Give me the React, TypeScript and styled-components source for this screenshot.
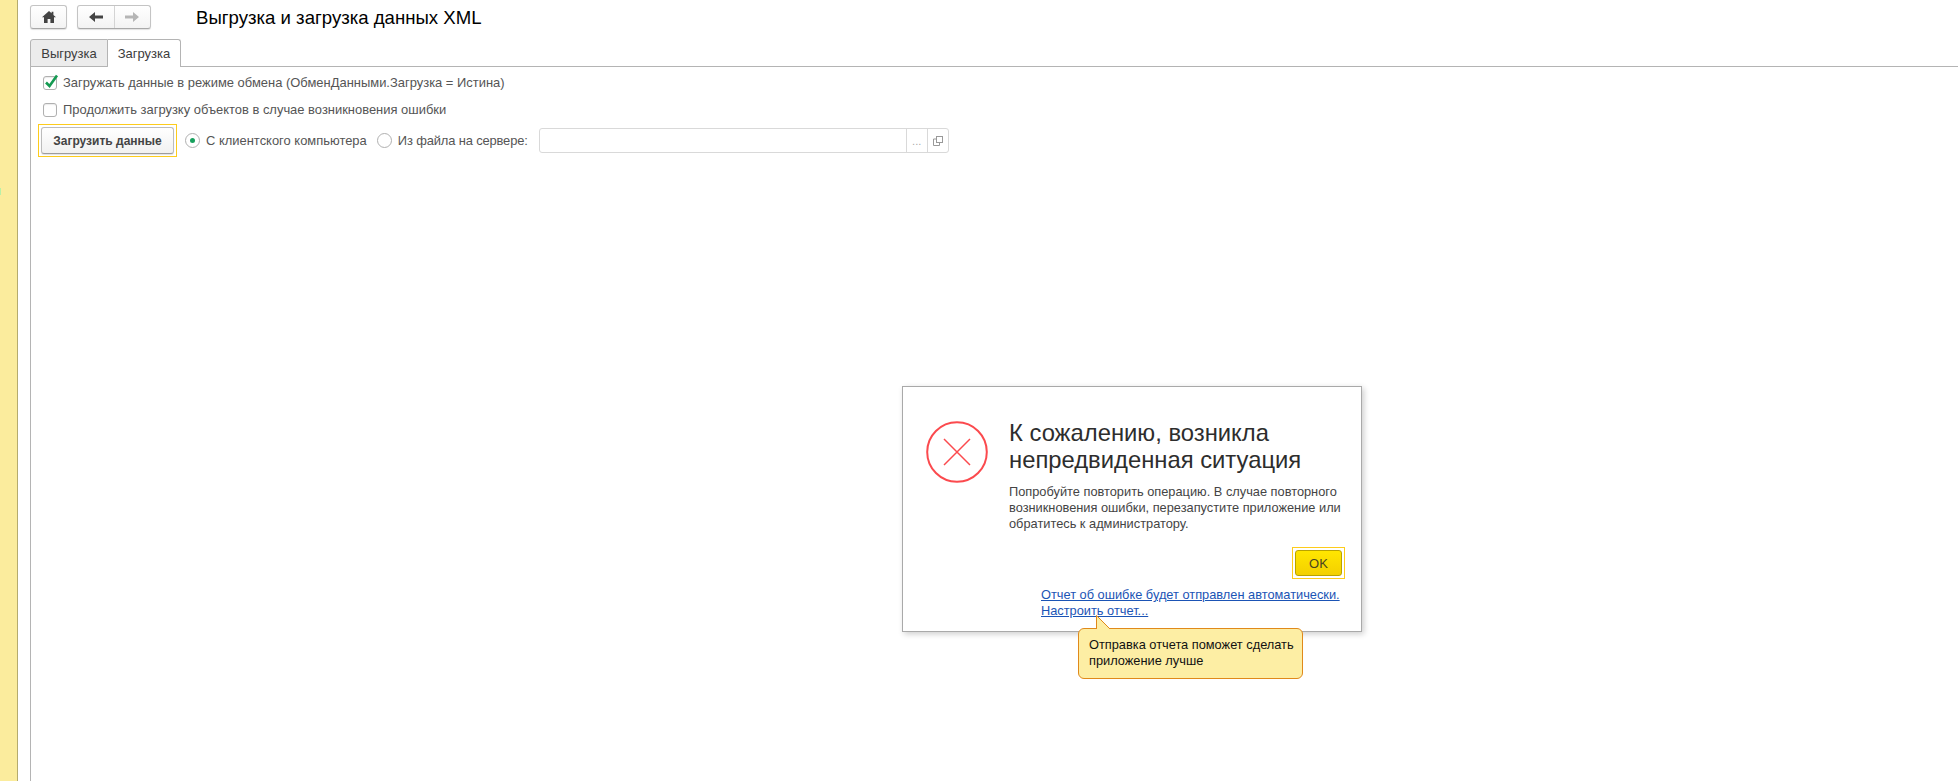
import { createGlobalStyle, styled } from 'styled-components'

const GlobalStyle = createGlobalStyle`
  html, body {
    margin: 0;
    padding: 0;
    height: 100%;
    background: #fff;
    overflow: hidden;
  }
  #root {
    height: 100%;
  }
  * {
    box-sizing: border-box;
  }
`

const Page = styled.div`
  position: relative;
  display: flex;
  width: 1958px;
  height: 781px;
  overflow: hidden;
  font-family: "Liberation Sans", Arial, sans-serif;
  font-size: 12px;
  color: #4b4b4b;
`

const SideStrip = styled.div`
  position: relative;
  flex: none;
  width: 18px;
  background: #fbec9d;
  border-right: 1px solid #b5ab6e;

  &::after {
    content: '';
    position: absolute;
    left: 0;
    top: 188px;
    width: 1px;
    height: 7px;
    background: #b8f0a8;
  }
`

const Main = styled.div`
  flex: 1;
  display: flex;
  flex-direction: column;
  padding-left: 12px;
`

const Header = styled.div`
  display: flex;
  align-items: center;
  height: 39px;
  padding-bottom: 5px;
`

const ToolButton = styled.div<{ $width: number }>`
  display: flex;
  width: ${p => p.$width}px;
  height: 24px;
  margin-right: 10px;
  background: linear-gradient(#fff, #f3f3f3);
  border: 1px solid #c4c4c4;
  border-bottom-color: #a8a8a8;
  border-radius: 3px;
  box-shadow: 0 1px 1px rgba(0, 0, 0, 0.12);
`

const ToolCell = styled.div`
  flex: 1;
  display: flex;
  align-items: center;
  justify-content: center;

  & + & {
    border-left: 1px solid #d4d4d4;
  }
`

const Title = styled.h1`
  margin: 2px 0 0 35px;
  font-size: 18.6px;
  font-weight: 400;
  line-height: 24px;
  color: #000;
`

const TabBar = styled.div`
  display: flex;
  height: 28px;
  border-bottom: 1px solid #b4b4b4;
`

const Tab = styled.div<{ $active?: boolean }>`
  display: flex;
  align-items: center;
  justify-content: center;
  width: ${p => (p.$active ? 73 : 78)}px;
  height: 28px;
  font-size: 13px;
  color: #3c3c3c;
  background: ${p => (p.$active ? '#fff' : '#ececec')};
  border: 1px solid #b4b4b4;
  border-left: ${p => (p.$active ? 'none' : '1px solid #b4b4b4')};
  border-bottom: ${p => (p.$active ? 'none' : '1px solid #b4b4b4')};
  border-radius: ${p => (p.$active ? '0 3px 0 0' : '3px 0 0 0')};
`

const Panel = styled.div`
  flex: 1;
  border-left: 1px solid #b4b4b4;
  padding: 8px 0 0 7px;
`

const CheckRow = styled.div`
  display: flex;
  align-items: center;
  height: 16px;
  margin-left: 5px;

  & + & {
    margin-top: 11px;
  }
`

const CheckBox = styled.span`
  position: relative;
  flex: none;
  width: 14px;
  height: 14px;
  margin-right: 6px;
  background: #fff;
  border: 1px solid #b0b0b0;
  border-radius: 3px;
  box-shadow: inset 0 1px 1px rgba(0, 0, 0, 0.08);

  svg {
    position: absolute;
    left: 0;
    top: -4px;
  }
`

const FieldText = styled.span<{ $tight?: boolean }>`
  font-size: 12.95px;
  letter-spacing: ${p => (p.$tight ? '-0.15px' : '0')};
  line-height: 16px;
  white-space: nowrap;
  color: #555;
`

const ActionRow = styled.div`
  display: flex;
  align-items: center;
  height: 33px;
  margin-top: 6px;
`

const FocusFrame = styled.div`
  flex: none;
  padding: 2px;
  background: #fff;
  border: 1px solid #fdcc1c;
`

const LoadButton = styled.div`
  display: flex;
  align-items: center;
  justify-content: center;
  width: 133px;
  height: 27px;
  font-size: 12px;
  font-weight: 700;
  color: #444;
  background: linear-gradient(#fff, #f1f1f1);
  border: 1px solid #bcbcbc;
  border-bottom-color: #9d9d9d;
  border-radius: 3px;
  box-shadow: 0 1px 1px rgba(0, 0, 0, 0.12);
`

const RadioItem = styled.div<{ $gap: number }>`
  display: flex;
  align-items: center;
  margin-left: ${p => p.$gap}px;
`

const RadioMark = styled.span<{ $checked?: boolean }>`
  flex: none;
  display: flex;
  align-items: center;
  justify-content: center;
  width: 15px;
  height: 15px;
  margin-right: 6px;
  background: #fff;
  border: 1px solid #b0b0b0;
  border-radius: 50%;

  &::after {
    content: '';
    display: ${p => (p.$checked ? 'block' : 'none')};
    width: 5px;
    height: 5px;
    border-radius: 50%;
    background: #17a05d;
  }
`

const PathInput = styled.div`
  flex: none;
  display: flex;
  width: 410px;
  height: 25px;
  margin-left: 11px;
  background: #fff;
  border: 1px solid #d9d9d9;
  border-radius: 3px;
`

const PathValue = styled.div`
  flex: 1;
`

const PathButton = styled.div`
  flex: none;
  display: flex;
  align-items: center;
  justify-content: center;
  width: 21px;
  border-left: 1px solid #d9d9d9;
  font-size: 11px;
  color: #aaa;
`

const Dialog = styled.div`
  position: absolute;
  left: 902px;
  top: 386px;
  width: 460px;
  height: 246px;
  display: grid;
  grid-template-columns: 106px 1fr;
  padding: 34px 0 0 0;
  background: #fff;
  border: 1px solid #a9a9a9;
  box-shadow: 2px 2px 6px rgba(0, 0, 0, 0.2);
`

const ErrorIcon = styled.div`
  padding-left: 23px;
`

const DialogBody = styled.div`
  display: flex;
  flex-direction: column;
`

const DialogTitle = styled.div`
  font-size: 23.8px;
  line-height: 27px;
  margin-top: -2px;
  color: #2d2d2d;
  white-space: nowrap;
`

const DialogText = styled.div`
  margin-top: 11px;
  font-size: 12.8px;
  line-height: 16px;
  color: #444;
  white-space: nowrap;
`

const DialogActions = styled.div`
  display: flex;
  justify-content: flex-end;
  margin: 15px 16px 0 0;
`

const OkFrame = styled.div`
  padding: 2px;
  border: 1px solid #fdcc1c;
`

const OkButton = styled.div`
  display: flex;
  align-items: center;
  justify-content: center;
  width: 47px;
  height: 26px;
  font-size: 13px;
  color: #4a4520;
  background: linear-gradient(#ffe600, #f3d000);
  border: 1px solid #b9a200;
  border-radius: 3px;
`

const ReportLinks = styled.div`
  margin: 8px 0 0 32px;
  font-size: 12.8px;
  line-height: 16px;
  white-space: nowrap;
`

const ReportLink = styled.a`
  display: table;
  color: #1b54b5;
  text-decoration: underline;
`

const Hint = styled.div`
  position: absolute;
  left: 1078px;
  top: 628px;
  width: 225px;
  height: 51px;
  padding: 8px 10px;
  font-size: 12.8px;
  line-height: 16px;
  color: #111;
  background: #fdeea4;
  border: 1px solid #e0891a;
  border-radius: 6px;
  white-space: nowrap;

  svg {
    position: absolute;
    left: 17px;
    top: -14px;
  }
`

const HomeIcon = () => (
  <svg width="14" height="12" viewBox="0 0 14 12">
    <path
      d="M7 0 L9.6 2.3 L9.6 0.8 L11.4 0.8 L11.4 3.9 L14 6.2 L12 6.2 L12 12 L8.4 12 L8.4 8 L5.6 8 L5.6 12 L2 12 L2 6.2 L0 6.2 Z"
      fill="#444"
    />
  </svg>
)

const ArrowIcon = ({ left, color }: { left?: boolean; color: string }) => (
  <svg width="14" height="10" viewBox="0 0 14 10">
    <path
      d={left ? 'M0 5 L6 0 L6 3.4 L14 3.4 L14 6.6 L6 6.6 L6 10 Z' : 'M14 5 L8 0 L8 3.4 L0 3.4 L0 6.6 L8 6.6 L8 10 Z'}
      fill={color}
    />
  </svg>
)

export default function App() {
  return (
    <Page>
      <GlobalStyle />
      <SideStrip />
      <Main>
        <Header>
          <ToolButton $width={37}>
            <ToolCell><HomeIcon /></ToolCell>
          </ToolButton>
          <ToolButton $width={74}>
            <ToolCell><ArrowIcon left color="#444" /></ToolCell>
            <ToolCell><ArrowIcon color="#b5b5b5" /></ToolCell>
          </ToolButton>
          <Title>Выгрузка и загрузка данных XML</Title>
        </Header>
        <TabBar>
          <Tab>Выгрузка</Tab>
          <Tab $active>Загрузка</Tab>
        </TabBar>
        <Panel>
          <CheckRow>
            <CheckBox>
              <svg width="17" height="17" viewBox="0 0 17 17">
                <path d="M2 9.5 L5.5 13 L13 2.5" fill="none" stroke="#159a52" strokeWidth="2.6" />
              </svg>
            </CheckBox>
            <FieldText>Загружать данные в режиме обмена (ОбменДанными.Загрузка = Истина)</FieldText>
          </CheckRow>
          <CheckRow>
            <CheckBox />
            <FieldText>Продолжить загрузку объектов в случае возникновения ошибки</FieldText>
          </CheckRow>
          <ActionRow>
            <FocusFrame>
              <LoadButton>Загрузить данные</LoadButton>
            </FocusFrame>
            <RadioItem $gap={8}>
              <RadioMark $checked />
              <FieldText>С клиентского компьютера</FieldText>
            </RadioItem>
            <RadioItem $gap={10}>
              <RadioMark />
              <FieldText $tight>Из файла на сервере:</FieldText>
            </RadioItem>
            <PathInput>
              <PathValue />
              <PathButton>...</PathButton>
              <PathButton>
                <svg width="10" height="10" viewBox="0 0 10 10" fill="none" stroke="#999">
                  <rect x="3.5" y="0.5" width="6" height="6" />
                  <path d="M3.5 3 H0.5 V9.5 H6.5 V6.5" />
                </svg>
              </PathButton>
            </PathInput>
          </ActionRow>
        </Panel>
      </Main>
      <Dialog>
        <ErrorIcon>
          <svg width="62" height="62" viewBox="0 0 62 62" fill="none" stroke="#fb4a4e">
            <circle cx="31" cy="31" r="29.8" strokeWidth="2" />
            <path d="M18 18 L44 44 M44 18 L18 44" strokeWidth="1.5" />
          </svg>
        </ErrorIcon>
        <DialogBody>
          <DialogTitle>
            К сожалению, возникла<br />непредвиденная ситуация
          </DialogTitle>
          <DialogText>
            Попробуйте повторить операцию. В случае повторного<br />
            возникновения ошибки, перезапустите приложение или<br />
            обратитесь к администратору.
          </DialogText>
          <DialogActions>
            <OkFrame>
              <OkButton>OK</OkButton>
            </OkFrame>
          </DialogActions>
          <ReportLinks>
            <ReportLink>Отчет об ошибке будет отправлен автоматически.</ReportLink>
            <ReportLink>Настроить отчет...</ReportLink>
          </ReportLinks>
        </DialogBody>
      </Dialog>
      <Hint>
        <svg width="20" height="15" viewBox="0 0 20 15">
          <path d="M0.5 15 L0.5 0.5 L14 14 L14 15 Z" fill="#fdeea4" />
          <path d="M0.5 14 L0.5 0.5 L14 14" fill="none" stroke="#e0891a" />
        </svg>
        Отправка отчета поможет сделать<br />приложение лучше
      </Hint>
    </Page>
  )
}
